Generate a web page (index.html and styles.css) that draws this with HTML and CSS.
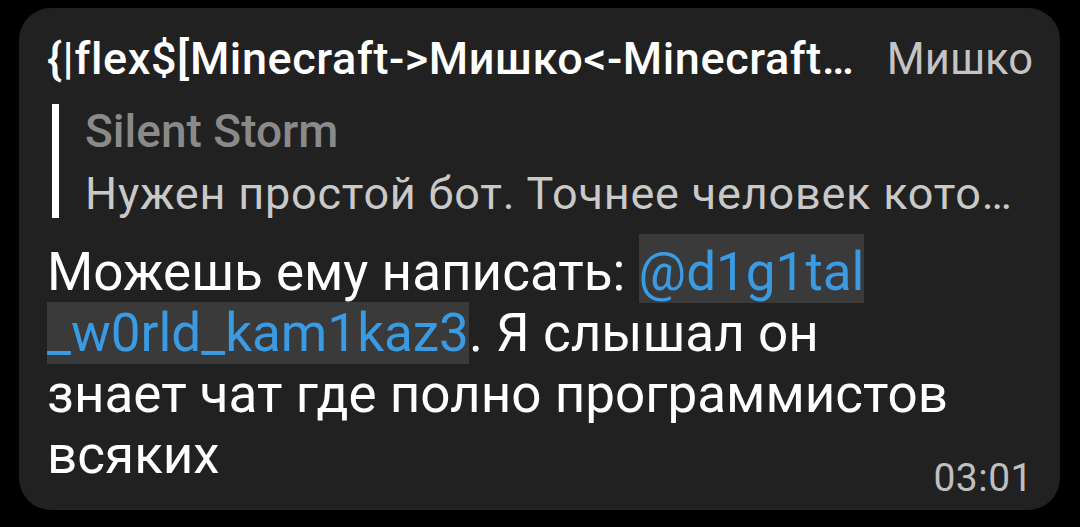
FILE: index.html
```html
<!doctype html>
<html>
<head>
<meta charset="utf-8">
<title>Сообщение</title>
<link rel="stylesheet" href="styles.css">
</head>

<body>
	<div class="bubble">
		<div class="head">
			<span class="chat">{|flex$[Minecraft-&gt;Мишко&lt;-Minecraft…</span>
			<span class="author">Мишко</span>
		</div>
		<div class="reply">
			<div class="reply-name">Silent Storm</div>
			<div class="reply-text">Нужен простой бот. Точнее человек кото…</div>
		</div>
		<div class="msg">Можешь ему написать: <a class="mention"><span class="m-first">@d1g1tal</span><br><span>_w0rld_kam1kaz3</span></a>. Я слышал он знает чат где полно программистов всяких</div>
		<div class="meta">03:01</div>
	</div>
</body>
</html>
```

FILE: styles.css
```css
*{margin:0; padding:0;}
body{background:#000; font-family:Roboto, "Noto Sans", sans-serif;}
.bubble{ margin:8px 20px 0 19px; padding:26px 27px 12px 28px; background:#212121; border-radius:32px;}
.head{ display:flex; align-items:baseline; line-height:50px; white-space:nowrap;}
.chat{ font-size:45px; letter-spacing:0.6px; color:#fff; font-weight:500;}
.author{ margin-left:auto; font-size:43.5px; color:#c4c4c4;}
.reply{ margin:19px 0 0 5px; padding-left:26px; border-left:7px solid #fff; white-space:nowrap;}
.reply-name{ font-size:46px; line-height:54px; font-weight:500; color:#8a8a8a;}
.reply-text{ margin-top:12px; font-size:45px; line-height:48px; letter-spacing:0.8px; color:#c9c9c9;}
.msg{ width:905px; margin-top:24px; font-size:53px; line-height:61px; color:#fff;}
.mention{ color:#3a9be2;}
.mention span{ background:#3a3a3a;}
.mention .m-first{ padding-top:7px;}
.meta{ margin-top:-28px; text-align:right; font-size:39px; line-height:40px; letter-spacing:0.5px; color:#bfbfbf;}
```
